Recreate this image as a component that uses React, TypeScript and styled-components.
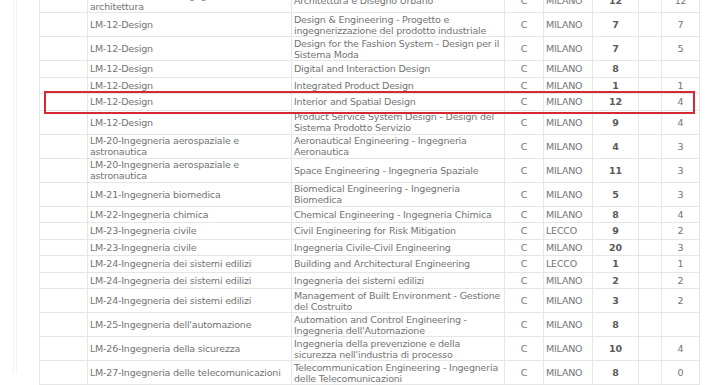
import React from 'react';
import styled, { createGlobalStyle } from 'styled-components';

const GlobalStyle = createGlobalStyle`
	html, body {
		margin: 0;
		padding: 0;
		background: #fff;
		overflow: hidden;
	}
`;

const Page = styled.div`
	position: relative;
	width: 720px;
	height: 385px;
	overflow: hidden;
`;

const Frame = styled.div`
	margin-left: 13px;
	border-left: 1px solid #eef0f2;
	padding-left: 2px;
	height: 100%;
`;

const Inner = styled.div`
	border-left: 1px solid #f2f3f5;
	padding-left: 22px;
	height: 100%;
`;

const Table = styled.table`
	margin-top: -12px;
	width: 660px;
	table-layout: fixed;
	border-collapse: collapse;
	font-family: 'DejaVu Sans', Verdana, sans-serif;
	font-size: 9.5px;
	letter-spacing: -0.2px;
	color: #747474;
`;

const Col = styled.col<{ $w: number }>`
	width: ${(p) => p.$w}px;
`;

const Tr = styled.tr<{ $tall?: boolean }>`
	height: ${(p) => (p.$tall ? 24 : 16.5)}px;
`;

const Td = styled.td<{ $align?: string; $bold?: boolean }>`
	border: 1px solid #e6e6e6;
	padding: 0 2px;
	line-height: 11px;
	vertical-align: middle;
	text-align: ${(p) => p.$align || 'left'};
	font-weight: ${(p) => (p.$bold ? 'bold' : 'normal')};
	color: ${(p) => (p.$bold ? '#5a5a5a' : '#747474')};
	white-space: nowrap;
	overflow: hidden;
`;

const Highlight = styled.div`
	position: absolute;
	left: 44px;
	top: 91px;
	width: 647px;
	height: 19px;
	border: 2px solid #d42a34;
	pointer-events: none;
`;

type Row = {
	cls: string | string[];
	name: string | string[];
	site: string;
	n: string;
	m: string;
};

const widths = [48, 204, 213, 39, 49, 46, 23, 38];

const rows: Row[] = [
	{ cls: ['LM-4-Architettura e ingegneria edile-', 'architettura'], name: 'Architettura e Disegno Urbano', site: 'MILANO', n: '12', m: '12' },
	{ cls: 'LM-12-Design', name: ['Design & Engineering - Progetto e', 'ingegnerizzazione del prodotto industriale'], site: 'MILANO', n: '7', m: '7' },
	{ cls: 'LM-12-Design', name: ['Design for the Fashion System - Design per il', 'Sistema Moda'], site: 'MILANO', n: '7', m: '5' },
	{ cls: 'LM-12-Design', name: 'Digital and Interaction Design', site: 'MILANO', n: '8', m: '' },
	{ cls: 'LM-12-Design', name: 'Integrated Product Design', site: 'MILANO', n: '1', m: '1' },
	{ cls: 'LM-12-Design', name: 'Interior and Spatial Design', site: 'MILANO', n: '12', m: '4' },
	{ cls: 'LM-12-Design', name: ['Product Service System Design - Design del', 'Sistema Prodotto Servizio'], site: 'MILANO', n: '9', m: '4' },
	{ cls: ['LM-20-Ingegneria aerospaziale e', 'astronautica'], name: ['Aeronautical Engineering - Ingegneria', 'Aeronautica'], site: 'MILANO', n: '4', m: '3' },
	{ cls: ['LM-20-Ingegneria aerospaziale e', 'astronautica'], name: 'Space Engineering - Ingegneria Spaziale', site: 'MILANO', n: '11', m: '3' },
	{ cls: 'LM-21-Ingegneria biomedica', name: ['Biomedical Engineering - Ingegneria', 'Biomedica'], site: 'MILANO', n: '5', m: '3' },
	{ cls: 'LM-22-Ingegneria chimica', name: 'Chemical Engineering - Ingegneria Chimica', site: 'MILANO', n: '8', m: '4' },
	{ cls: 'LM-23-Ingegneria civile', name: 'Civil Engineering for Risk Mitigation', site: 'LECCO', n: '9', m: '2' },
	{ cls: 'LM-23-Ingegneria civile', name: 'Ingegneria Civile-Civil Engineering', site: 'MILANO', n: '20', m: '3' },
	{ cls: 'LM-24-Ingegneria dei sistemi edilizi', name: 'Building and Architectural Engineering', site: 'LECCO', n: '1', m: '1' },
	{ cls: 'LM-24-Ingegneria dei sistemi edilizi', name: 'Ingegneria dei sistemi edilizi', site: 'MILANO', n: '2', m: '2' },
	{ cls: 'LM-24-Ingegneria dei sistemi edilizi', name: ['Management of Built Environment - Gestione', 'del Costruito'], site: 'MILANO', n: '3', m: '2' },
	{ cls: "LM-25-Ingegneria dell'automazione", name: ['Automation and Control Engineering -', "Ingegneria dell'Automazione"], site: 'MILANO', n: '8', m: '' },
	{ cls: 'LM-26-Ingegneria della sicurezza', name: ['Ingegneria della prevenzione e della', "sicurezza nell'industria di processo"], site: 'MILANO', n: '10', m: '4' },
	{ cls: 'LM-27-Ingegneria delle telecomunicazioni', name: ['Telecommunication Engineering - Ingegneria', 'delle Telecomunicazioni'], site: 'MILANO', n: '8', m: '0' },
];

function Lines({ text }: { text: string | string[] }) {
	if (typeof text === 'string') return <>{text}</>;
	return (
		<>
			{text.map((t, i) => (
				<React.Fragment key={i}>
					{i > 0 && <br />}
					{t}
				</React.Fragment>
			))}
		</>
	);
}

export default function App() {
	return (
		<Page>
			<GlobalStyle />
			<Frame>
				<Inner>
					<Table>
						<colgroup>
							{widths.map((w, i) => (
								<Col key={i} $w={w} />
							))}
						</colgroup>
						<tbody>
							{rows.map((r, i) => (
								<Tr key={i} $tall={Array.isArray(r.cls) || Array.isArray(r.name)}>
									<Td />
									<Td><Lines text={r.cls} /></Td>
									<Td><Lines text={r.name} /></Td>
									<Td $align="center">C</Td>
									<Td>{r.site}</Td>
									<Td $align="center" $bold>{r.n}</Td>
									<Td />
									<Td $align="center">{r.m}</Td>
								</Tr>
							))}
						</tbody>
					</Table>
				</Inner>
			</Frame>
			<Highlight />
		</Page>
	);
}
